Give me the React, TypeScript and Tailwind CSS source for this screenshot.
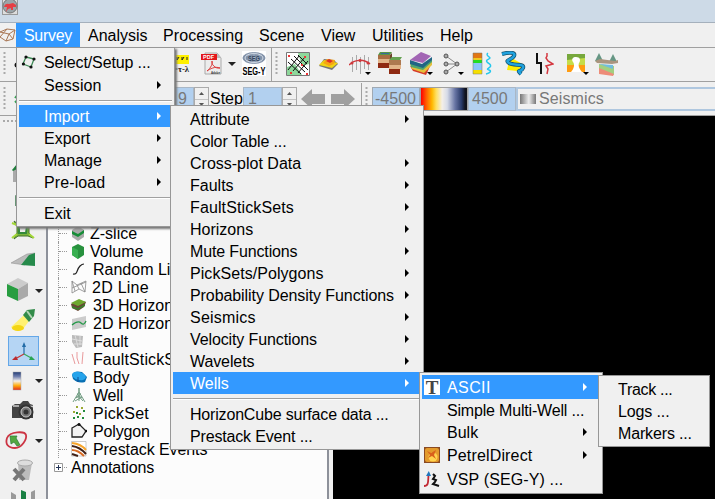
import React from "react";

type Entry = {
  label?: string;
  track?: string;
  arrow?: boolean;
  active?: boolean;
  tall?: boolean;
  icon?: React.ReactNode;
};

const SelectIcon = () => (
  <svg width="16" height="16" viewBox="0 0 16 16">
    <path d="M5 3L13 5L10 13L2 10Z" fill="none" stroke="#3d8a55" strokeWidth="1.3" />
    <g fill="#111"><circle cx="5" cy="3" r="1.6" /><circle cx="13" cy="5" r="1.6" /><circle cx="10" cy="13" r="1.6" /><circle cx="2.4" cy="10" r="1.6" /></g>
  </svg>
);

const TextIcon = () => (
  <span className="flex h-4 w-4 items-center justify-center bg-white font-['Liberation_Serif',serif] text-[19px] font-bold leading-none text-[#444]">T</span>
);

const PetrelIcon = () => (
  <svg width="16" height="16" viewBox="0 0 16 16">
    <rect width="16" height="16" fill="#8a4a22" />
    <rect x="1" y="1" width="14" height="14" rx="2" fill="#e39a2c" />
    <circle cx="9" cy="10" r="4.5" fill="#ffd34f" />
    <path d="M3 4L7 6L12 3L10 8L12 12L8 9L4 11L6 8Z" fill="#d9601c" />
  </svg>
);

const VspIcon = () => (
  <svg width="16" height="16" viewBox="0 0 16 16">
    <path d="M0 15C5 15 4 10 4.500 4" fill="none" stroke="#c22a35" strokeWidth="1.800" />
    <path d="M2 5L4.800 0L7 5Z" fill="#2277bd" />
    <path d="M9 3L11 5L9 8L12 9L11 11L9 13L15 15" fill="none" stroke="#111" strokeWidth="2" />
  </svg>
);

const surveyMenu: Entry[] = [
  { label: "Select/Setup ...", track: "tracking-[-0.12px]", tall: true, icon: <SelectIcon /> },
  { label: "Session", track: "tracking-[0.1px]", arrow: true },
  {},
  { label: "Import", arrow: true, active: true },
  { label: "Export", arrow: true },
  { label: "Manage", arrow: true },
  { label: "Pre-load", track: "tracking-[0.1px]", arrow: true },
  {},
  { label: "Exit" },
];

const importMenu: Entry[] = [
  { label: "Attribute", arrow: true },
  { label: "Color Table ...", track: "tracking-[-0.13px]" },
  { label: "Cross-plot Data", arrow: true },
  { label: "Faults", arrow: true },
  { label: "FaultStickSets", track: "tracking-[0.12px]", arrow: true },
  { label: "Horizons", arrow: true },
  { label: "Mute Functions", track: "tracking-[-0.14px]", arrow: true },
  { label: "PickSets/Polygons", track: "tracking-[0.06px]", arrow: true },
  { label: "Probability Density Functions", track: "tracking-[-0.08px]", arrow: true },
  { label: "Seismics", track: "tracking-[0.22px]", arrow: true },
  { label: "Velocity Functions", track: "tracking-[-0.11px]", arrow: true },
  { label: "Wavelets", track: "tracking-[-0.1px]", arrow: true },
  { label: "Wells", arrow: true, active: true },
  {},
  { label: "HorizonCube surface data ...", track: "tracking-[-0.18px]" },
  { label: "Prestack Event ...", track: "tracking-[-0.16px]" },
];

const wellsMenu: Entry[] = [
  { label: "ASCII", track: "tracking-[0.4px]", arrow: true, active: true, tall: true, icon: <TextIcon /> },
  { label: "Simple Multi-Well ...", track: "tracking-[-0.18px]" },
  { label: "Bulk", arrow: true },
  { label: "PetrelDirect", track: "tracking-[0.15px]", arrow: true, tall: true, icon: <PetrelIcon /> },
  { label: "VSP (SEG-Y) ...", track: "tracking-[0.13px]", tall: true, icon: <VspIcon /> },
];

const asciiMenu: Entry[] = [
  { label: "Track ...", track: "tracking-[-0.3px]" },
  { label: "Logs ...", track: "tracking-[-0.12px]" },
  { label: "Markers ...", track: "tracking-[-0.15px]" },
];

function Menu({ entries, place, gutter, tail }: { entries: Entry[]; place: string; gutter: string; tail: string }) {
  return (
    <div className={`absolute border border-[#979797] bg-[#f0f0f0] p-[2px] ${place}`}>
      {entries.map((e, i) =>
        e.label ? (
          <div key={i} className={`flex items-center ${e.tall ? "h-6" : "h-[22px]"} ${e.active ? "bg-[#3399ff] text-white" : ""}`}>
            <span className={`shrink-0 pl-[2px] ${gutter}`}>{e.icon}</span>
            <span className={`grow whitespace-pre pt-[2px] ${e.track ?? ""}`}>{e.label}</span>
            {e.arrow && (
              <svg width="4" height="8" viewBox="0 0 4 8" className={`shrink-0 ${tail}`}>
                <path d="M0 0L4 4L0 8Z" fill="currentColor" />
              </svg>
            )}
          </div>
        ) : (
          <div key={i} className="flex h-[9px] items-center">
            <div className="h-[2px] w-full border-b border-white bg-[#a0a0a0]" />
          </div>
        )
      )}
    </div>
  );
}

const Caret = ({ cls = "" }: { cls?: string }) => (
  <svg width="8" height="4" viewBox="0 0 8 4" className={`shrink-0 ${cls}`}><path d="M0 0H8L4 4Z" fill="#222" /></svg>
);

const Handle = ({ cls = "" }: { cls?: string }) => (
  <svg width="4" height="24" viewBox="0 0 4 24" className={`shrink-0 ${cls}`}>
    <path d="M1.500 0V24" stroke="#aaa" strokeWidth="2" strokeDasharray="2 2" />
  </svg>
);

function Toolbar() {
  return (
    <div className="flex h-[34px] shrink-0 items-center border-b border-[#a0a0a0] pb-[2px]">
      <Handle cls="ml-[3px]" />
      <svg width="6" height="24" viewBox="0 0 6 24" className="ml-[7px]"><circle cx="3" cy="13" r="2.5" fill="#111" /></svg>
      <svg width="17" height="24" viewBox="0 0 17 24" className="ml-[153px] overflow-visible">
        <rect y="3" width="16" height="9" fill="#fff000" />
        <path d="M1 5V8M4 5V8L6 5M9 5V8L11 5M14 5V8" stroke="#222" fill="none" />
        <text x="0" y="20" fontSize="9" fontWeight="bold" fontFamily="Liberation Serif" textLength="16" lengthAdjust="spacingAndGlyphs" fill="#222">=τ-λ</text>
      </svg>
      <svg width="23" height="24" viewBox="0 0 23 24" className="ml-[10px] overflow-visible">
        <path d="M5 1H17L21 6V22H5Z" fill="#ececec" stroke="#aaa" />
        <path d="M17 1V6H21Z" fill="#bbb" />
        <rect x="1" y="2" width="16" height="6" fill="#e3161b" />
        <text x="3" y="7" fontSize="6" fontWeight="bold" fontFamily="Liberation Sans" textLength="11" lengthAdjust="spacingAndGlyphs" fill="#fff">PDF</text>
        <path d="M7 19C11 16 13 11 12 9C11 12 15 17 20 16C15 14 10 17 7 19Z" fill="none" stroke="#dc3a3a" />
        <text x="11" y="21.500" fontSize="4" fontWeight="bold" fontFamily="Liberation Sans" textLength="9" lengthAdjust="spacingAndGlyphs" fill="#333">Adobe</text>
      </svg>
      <Caret cls="ml-[5px]" />
      <svg width="26" height="26" viewBox="0 0 26 26" className="ml-[5px] overflow-visible">
        <rect x="1" width="24" height="25" fill="#fff" />
        <ellipse cx="13" cy="7" rx="11.500" ry="6" fill="#8292a9" />
        <ellipse cx="13" cy="7" rx="9" ry="4.500" fill="none" stroke="#d2dae5" />
        <path d="M13 1V13M5 4L21 10M5 10L21 4" stroke="#bdc9d8" strokeWidth=".6" />
        <text x="7" y="9.500" fontSize="6.500" fontWeight="bold" fontFamily="Liberation Sans" textLength="12" lengthAdjust="spacingAndGlyphs" fill="#34465e">SEG</text>
        <text x="1.500" y="24" fontSize="11.500" fontWeight="bold" fontFamily="Liberation Sans" textLength="23" lengthAdjust="spacingAndGlyphs" fill="#000">SEG-Y</text>
      </svg>
      <div className="ml-[4px] h-[34px] w-px bg-[#a0a0a0]" />
      <Handle cls="ml-[3px]" />
      <svg width="24" height="24" viewBox="0 0 24 24" className="ml-[7px]">
        <path d="M.5 .5H23.500V23.500H.5Z" fill="#fff" stroke="#777" />
        <path d="M12 1H23V12L16 14ZM1 15L9 12L16 23H1Z" fill="#8ed79b" />
        <path d="M2 10L15 22M5 7L19 20M8 4L22 18M12 3L21 12M2 18L13 4M7 19L19 5M12 21L22 9" stroke="#111" strokeWidth="1" />
        <g fill="#e33"><rect x="2" y="3" width="2" height="2" /><rect x="18" y="4" width="2" height="2" /><rect x="15" y="12" width="2" height="2" /><rect x="4" y="20" width="2" height="2" /><rect x="20" y="21" width="2" height="2" /></g>
      </svg>
      <svg width="19" height="12" viewBox="0 0 19 12" className="ml-[9px]">
        <path d="M0 8L5 1L15 2L19 6L13 12Z" fill="#777" />
        <path d="M0 7L5 2L19 5L13 10Z" fill="#f0d414" />
        <path d="M4 5L8 1L16 2L15 6L10 8Z" fill="#f8a414" />
        <path d="M7 3L10 1L14 3L11 5Z" fill="#df3025" />
      </svg>
      <svg width="23" height="24" viewBox="0 0 23 24" className="ml-[11px]">
        <path d="M3.500 5V20M7.500 3V18M11.500 5V22M15.500 3V17M19.500 5V18" stroke="#aaa" />
        <path d="M0 13C5 8 14 6 21 12" fill="none" stroke="#cf383c" strokeWidth="1.500" />
        <g fill="#cf383c"><circle cx="3" cy="11" r="1.500" /><circle cx="11" cy="8.500" r="1.500" /><circle cx="19" cy="11" r="1.500" /></g>
        <path d="M16 20H22L19 23Z" fill="#000" />
      </svg>
      <svg width="26" height="25" viewBox="0 0 26 25" className="ml-[5px]">
        <path d="M1 4L3 1H15L13 4Z" fill="#579548" /><path d="M4 2H12V3H4Z" fill="#376b9b" />
        <path d="M1 4H15V8H1Z" fill="#a86e43" /><path d="M1 8H14V12H1Z" fill="#e2b489" /><path d="M1 12H14V17H1Z" fill="#8f2a12" />
        <path d="M13 4L15 2V16L13 18Z" fill="#6b4429" />
        <path d="M12 9L15 6H25L23 9Z" fill="#65a252" />
        <path d="M12 9H24V14H12Z" fill="#ad7950" /><path d="M12 14H24V18H12Z" fill="#e2b489" /><path d="M12 18H23V23H12Z" fill="#8f2a12" />
      </svg>
      <svg width="25" height="25" viewBox="0 0 25 25" className="ml-[6px]">
        <path d="M1 15L14 19L23 11L17 24L4 20Z" fill="#d73a29" />
        <path d="M1 13L14 17L23 9V14L15 22L3 18Z" fill="#e4be3a" />
        <path d="M1 11L14 15L23 7V11L14 19L2 16Z" fill="#4fa56e" />
        <path d="M1 9L13 13L23 6V9L14 17L1 13Z" fill="#216484" />
        <path d="M1 9L12 1L22 5L14 12Z" fill="#a265b4" />
        <path d="M18 21H24L21 24Z" fill="#000" />
      </svg>
      <svg width="22" height="24" viewBox="0 0 22 24" className="ml-[9px]">
        <path d="M3 4L14 12L3 20M3 12H14" fill="none" stroke="#888" />
        <g fill="#aaa" stroke="#555"><circle cx="3" cy="4" r="2" /><circle cx="3" cy="12" r="2" /><circle cx="3" cy="20" r="2" /><circle cx="14" cy="12" r="2" /></g>
        <path d="M15 20H21L18 23Z" fill="#000" />
      </svg>
      <svg width="21" height="23" viewBox="0 0 21 23" className="ml-[7px]">
        <path d="M1 1H10V6H1Z" fill="#e27613" /><path d="M1 6H10V8H1Z" fill="#edca21" /><path d="M1 8H10V11H1Z" fill="#24dc21" /><path d="M1 11H10V18H1Z" fill="#8bc5fa" /><path d="M1 18H10V22H1Z" fill="#f6df00" />
        <path d="M1 1H10V22H1Z" fill="none" stroke="#777" strokeWidth=".5" />
        <path d="M16 1C13 3 18 5 18 6S13 8 15 10S20 13 18 15S14 17 17 18S18 21 14 22" fill="none" stroke="#25c7ed" strokeWidth="1.500" />
      </svg>
      <svg width="25" height="25" viewBox="0 0 25 25" className="ml-[8px]">
        <path d="M9 6L23 14L16 20L6 19Z" fill="#ffed00" />
        <path d="M1 3C8 1 15 1 13 5S3 9 8 12S24 12 22 17S15 18 20 23" fill="none" stroke="#15516c" strokeWidth="4" />
        <path d="M1 3C8 1 15 1 13 5S3 9 8 12S24 12 22 17S15 18 20 23" fill="none" stroke="#20a2df" strokeWidth="2.500" />
      </svg>
      <svg width="19" height="23" viewBox="0 0 19 23" className="ml-[9px]">
        <path d="M2 1V11H6V22" fill="none" stroke="#111" strokeWidth="2" />
        <path d="M12 1V4L11 6L13 9L18 12L11 14L13 17L12 22" fill="none" stroke="#d43840" strokeWidth="1.500" />
      </svg>
      <svg width="22" height="23" viewBox="0 0 22 23" className="ml-[13px]">
        <path d="M0 2H18V20H0Z" fill="#77a83d" /><path d="M0 8L18 6V20H0Z" fill="#c5dc49" /><path d="M0 13H18V20H0Z" fill="#ff9c11" />
        <path d="M4 20C7 17 8 12 6 10C4 7 6 5 9 5C13 5 14 8 12 11C11 13 12 17 15 20Z" fill="#fff" />
        <path d="M16 20H22L19 23Z" fill="#000" />
      </svg>
      <svg width="24" height="24" viewBox="0 0 24 24" className="ml-[6px]">
        <path d="M4 1L8 9H0ZM18 2L22 10H14Z" fill="#669684" />
        <path d="M0 9L5 7L20 9L23 8V11L17 12L2 11Z" fill="#aa957f" />
        <path d="M4 12L19 14V23L4 20Z" fill="#a2cf80" /><path d="M4 12L18 13V17Z" fill="#70bdde" /><path d="M4 16L19 22L18 24L4 22Z" fill="#ed8c78" />
      </svg>
    </div>
  );
}

const Spinner = () => (
  <div className="flex h-6 w-[15px] shrink-0 flex-col items-center justify-between border border-[#aaa] bg-[#f0f0f0] py-1">
    <svg width="5" height="3" viewBox="0 0 5 3"><path d="M0 3H5L2.500 0Z" fill="#555" /></svg>
    <div className="h-px w-full bg-[#c4c4c4]" />
    <svg width="5" height="3" viewBox="0 0 5 3"><path d="M0 0H5L2.500 3Z" fill="#555" /></svg>
  </div>
);

function ValueBar() {
  return (
    <div className="flex h-[34px] shrink-0 items-center border-b border-[#a0a0a0] pt-px text-[#787878]">
      <Handle cls="ml-[3px]" />
      <svg width="5" height="20" viewBox="0 0 5 20" className="ml-[7px]"><path d="M5 4L1 9M1 12L4 15" stroke="#36a253" strokeWidth="2" /></svg>
      <div className="ml-[141px] flex h-6 w-[34px] shrink-0 items-center justify-end border border-[#a9b7c6] bg-[#b2d0ef] pr-[6px]">9</div>
      <Spinner />
      <div className="w-[34px] shrink-0 pl-px text-black">Step</div>
      <div className="flex h-6 w-[39px] shrink-0 items-center border border-[#a9b7c6] bg-[#b2d0ef] pl-[4px]">1</div>
      <Spinner />
      <svg width="54" height="20" viewBox="0 0 54 20" className="ml-[4px] shrink-0">
        <path d="M0 10L11 0V5H24V15H11V20ZM54 10L43 0V5H30V15H43V20Z" fill="#a0a0a0" />
      </svg>
      <div className="ml-[6px] h-8 w-px shrink-0 bg-[#a0a0a0]" />
      <Handle cls="ml-[3px]" />
      <div className="ml-[3px] flex h-6 w-[48px] shrink-0 items-center border border-[#a0a9b2] bg-[#b2d0ef] pl-[2px]">-4500</div>
      <div className="h-6 w-[48px] shrink-0 border border-[#a0a0a0] bg-[linear-gradient(90deg,#f00_0%,#ff6a00_13%,#ffb800_24%,#ffe060_33%,#f4efe8_46%,#d6dbe8_57%,#6875a4_74%,#283967_88%,#10121c_96%)]" />
      <div className="flex h-6 w-[48px] shrink-0 items-center border border-[#a9b7c6] bg-[#b2d0ef] pl-[3px]">4500</div>
      <div className="flex h-6 grow items-center border-2 border-r-0 border-[#afc7df] bg-[#f0f0f0] pl-[2px] tracking-[0.12px]">
        <div className="mr-[3px] h-[10px] w-4 bg-[linear-gradient(90deg,#777,#eee_55%,#777)]" />
        Seismics
      </div>
    </div>
  );
}

const sideIcons: { art: React.ReactNode; caret?: boolean; on?: boolean }[] = [
  { art: <g><path d="M3 14L7 9V26H3Z" fill="#aaa" /><path d="M2 14L7 8V13L3 15Z" fill="#1f7d3b" /></g> },
  { art: <path d="M5 9L9 11V20H5Z" fill="#699676" /> },
  { art: <g><path d="M4 5L8 8H18L21 6L19 11V17L23 22L18 20H8L4 23L7 17V11Z" fill="#7ab43d" stroke="#44732d" /><path d="M9 10H17L16 17H9Z" fill="#efefef" stroke="#348a3a" strokeWidth="2" /><path d="M2 7L7 9M23 5L19 9M2 22L7 18M24 22L19 18" stroke="#a4d838" strokeWidth="2" /></g> },
  { art: <g><path d="M1 17L17 8L25 7L15 19Z" fill="#bbb" stroke="#888" strokeWidth=".5" /><path d="M11 19L19 9L25 7V20Z" fill="#268a4b" /></g> },
  { art: <g><path d="M-3 8L8 2L18 7L8 13Z" fill="#ccc" /><path d="M-3 8L8 13V25L-3 20Z" fill="#279d40" /><path d="M8 13L18 7V20L8 25Z" fill="#aaa" /></g>, caret: true },
  { art: <g><path d="M1 21L14 9L19 15L13 23Q5 27 1 21Z" fill="#fff173" /><ellipse cx="8" cy="22" rx="6" ry="3" fill="#f3d514" /><path d="M13 9L17 4L25 3L24 10L19 16Z" fill="#328b49" /><path d="M17 5L22 12" stroke="#b2d4b3" strokeWidth="2" /></g> },
  { art: <g strokeWidth="1.200" fill="none"><path d="M14 17V8" stroke="#226ba7" /><path d="M14 17L5 22" stroke="#c53636" /><path d="M14 17L23 22" stroke="#36a85a" /><path d="M12 10L14 5L16 10Z" fill="#226ba7" /><path d="M6 19L2 23L8 23Z" fill="#ba2b2f" /><path d="M21 19L25 23L19 23Z" fill="#2aa454" /></g>, on: true },
  { art: <g><rect x="3" y="6" width="8" height="18" fill="url(#ramp)" stroke="#aaa" strokeWidth=".5" /></g>, caret: true },
  { art: <g><path d="M2 10L5 8H10L13 5H18L20 8L23 9V22H2Z" fill="#444" /><path d="M3 10H9M20 10.500H23" stroke="#ccc" strokeWidth="1.500" /><circle cx="16" cy="16" r="7.500" fill="#333" /><circle cx="16" cy="16" r="5" fill="#777" stroke="#ccc" /><circle cx="16" cy="16" r="2.500" fill="#333" /></g> },
  { art: <g><path d="M-3 12C0 5 15 5 16 9S12 22 5 22S-5 18-3 12Z" fill="#eee" stroke="#cc3443" strokeWidth="1.800" /><path d="M0 10L7 10L6 12L10 19L7 20L4 16L1 18Z" fill="#52a741" stroke="#287b35" strokeWidth=".7" /></g>, caret: true },
  { art: <g><path d="M8 6L22 7L19 24H9Z" fill="#bcbcbc" /><ellipse cx="15" cy="7" rx="7.500" ry="3" fill="#ddd" stroke="#aaa" /><path d="M4 13L14 24M14 13L4 24" stroke="#777" strokeWidth="4" /></g> },
  { art: <g><path d="M1 6L6 9V24H1Z" fill="#999" /><path d="M11 4L16 6V22H11Z" fill="#197f42" /><path d="M21 6L25 4V24H21Z" fill="#999" /></g> },
];

function SideBar() {
  return (
    <div className="flex w-[46px] shrink-0 flex-col pt-[4px]">
      <svg width="40" height="4" viewBox="0 0 40 4" className="mb-[32px] ml-[3px] shrink-0"><path d="M0 1H40" stroke="#aaa" strokeWidth="2" strokeDasharray="2 2" /></svg>
      {sideIcons.map((it, i) => (
        <div key={i} className="flex h-[30px] shrink-0 items-center pl-[8px]">
          <div className={`h-[30px] w-[31px] shrink-0 ${it.on ? "border border-[#64a7e8] bg-[#b5d5f4] pl-px" : "pl-[2px]"}`}>
            <svg width="28" height="28" viewBox="0 0 28 28" className="overflow-visible">
              <defs><linearGradient id="ramp" x2="0" y2="1"><stop stopColor="#233c75" /><stop offset=".25" stopColor="#7180af" /><stop offset=".5" stopColor="#f4efea" /><stop offset=".75" stopColor="#ffae11" /><stop offset="1" stopColor="#e52a19" /></linearGradient></defs>
              {it.art}
            </svg>
          </div>
          {it.caret && <Caret cls="-ml-[4px]" />}
        </div>
      ))}
    </div>
  );
}

const tree: { label: string; inset: string; track?: string; art: React.ReactNode }[] = [
  { label: "Z-slice", inset: "w-[19px]", art: <g><path d="M1 5L7 1L13 5V12L7 16L1 12Z" fill="#aaa" /><path d="M1 6L7 9L13 5V8L7 12L1 9Z" fill="#178d38" /></g> },
  { label: "Volume", inset: "w-[19px]", art: <g><path d="M1 4L7 1L13 4V12L7 16L1 12Z" fill="#28913e" /><path d="M1 4L7 7V16L1 12Z" fill="#38af50" /></g> },
  { label: "Random Line", inset: "w-[22px]", art: <path d="M2 13C7 14 5 9 9 5Q11 3 13 3" fill="none" stroke="#222" strokeWidth="1.200" /> },
  { label: "2D Line", inset: "w-[21px]", track: "tracking-[0.25px]", art: <path d="M1 2L6 6L15 2L14 13L8 10L1 14ZM6 6L8 10M1 2L4 12M10 4L14 13M1 9L15 3" fill="none" stroke="#888" strokeWidth=".8" /> },
  { label: "3D Horizon", inset: "w-[22px]", art: <g><path d="M0 7L8 3L15 5L13 10L7 14L1 11Z" fill="#6a4835" /><path d="M0 6L8 2L15 5L7 9Z" fill="#6ea82f" /><path d="M1 9L7 11L14 7V9L7 13L1 11Z" fill="#3b7c2c" /></g> },
  { label: "2D Horizon", inset: "w-[22px]", art: <g><path d="M1 4L15 1V12L1 15Z" fill="#ccc" /><path d="M1 10Q7 5 10 8T15 6" fill="none" stroke="#26994a" strokeWidth="1.300" /></g> },
  { label: "Fault", inset: "w-[22px]", track: "tracking-[-0.1px]", art: <g><path d="M1 2L12 3L11 14L5 15L1 9Z" fill="#bbb" /><path d="M1 6L11 8M4 2L7 14M9 3V12M3 11H11" stroke="#ddd" /></g> },
  { label: "FaultStickSet", inset: "w-[22px]", track: "tracking-[0.1px]", art: <path d="M1 3L4 13M6 1V7L8 13M12 1L11 13" fill="none" stroke="#e99a9c" /> },
  { label: "Body", inset: "w-[22px]", art: <g><path d="M1 6Q3 1 11 3L16 8L14 13Q7 15 2 10Z" fill="#086fb2" /><ellipse cx="8" cy="7" rx="7" ry="4" transform="rotate(15 8 7)" fill="#25a3eb" /><path d="M7 8V13" stroke="#104d94" /></g> },
  { label: "Well", inset: "w-[22px]", track: "tracking-[-0.2px]", art: <path d="M8 1V5L2 15M8 5L14 15M5 10H11L4 14M6 7L12 14M6 7H10L5 11M8 1V14" fill="none" stroke="#719c82" /> },
  { label: "PickSet", inset: "w-[22px]", track: "tracking-[0.25px]", art: <g><path d="M5 1H7V3H5ZM10 2H12V4H10ZM2 6H4V8H2ZM8 8H10V10H8Z" fill="#9aa831" /><path d="M12 5H14V7H12ZM2 12H4V14H2ZM6 11H8V13H6ZM11 12H13V14H11ZM5 7H7V9H5Z" fill="#248a3c" /></g> },
  { label: "Polygon", inset: "w-[22px]", track: "tracking-[-0.15px]", art: <g><path d="M1 5L8 1L15 8L11 14H1Z" fill="#f3f3f3" stroke="#222" strokeWidth="1.300" /><g fill="#111"><circle cx="8" cy="1.500" r="1.500" /><circle cx="15" cy="8" r="1.300" /></g></g> },
  { label: "Prestack Events", inset: "w-[22px]", track: "tracking-[-0.08px]", art: <g><path d="M.5 .5H15V15H.5Z" fill="#fff" stroke="#999" strokeWidth=".5" /><path d="M1 2Q10 3 15 9" stroke="#f7a52b" strokeWidth="2" fill="none" /><path d="M1 5Q9 6 15 13" stroke="#402118" strokeWidth="2" fill="none" /><path d="M1 9Q7 9 13 15" stroke="#d96c24" strokeWidth="2" fill="none" /><path d="M1 13L7 15" stroke="#402118" strokeWidth="2" /></g> },
];

function Tree() {
  return (
    <div className="w-[283px] shrink-0 border-l-2 border-r-2 border-[#8d919a] bg-[#fcfcfc] pl-[10px] pt-[108px]">
      {tree.map((t, i) => (
        <div key={i} className="flex h-[18px] items-center border-l border-dotted border-[#999]">
          <div className="mr-[4px] w-[8px] border-t border-dotted border-[#999]" />
          <span className={`shrink-0 ${t.inset}`}><svg width="16" height="16" viewBox="0 0 16 16">{t.art}</svg></span>
          <span className={`whitespace-pre pt-px ${t.track ?? ""}`}>{t.label}</span>
        </div>
      ))}
      <div className="-ml-[4px] flex h-[18px] items-center">
        <svg width="13" height="9" viewBox="0 0 13 9"><path d="M.5 .5H8.500V8.500H.5Z" fill="#fff" stroke="#999" /><path d="M2 4.500H7M4.500 2V7" stroke="#235" /><path d="M10 4.500H13" stroke="#999" strokeDasharray="1 1" /></svg>
        <span className="ml-[4px] pt-px tracking-[-0.12px]">Annotations</span>
      </div>
    </div>
  );
}

const bar = [
  ["Survey", "w-[64px] bg-[#3399ff] text-white tracking-[-0.3px]"],
  ["Analysis", "w-[75px]"],
  ["Processing", "w-[96px] tracking-[0.1px]"],
  ["Scene", "w-[62px]"],
  ["View", "w-[51px]"],
  ["Utilities", "w-[68px]"],
  ["Help", "w-[50px]"],
];

export default function App() {
  return (
    <div className="relative flex h-[499px] w-[715px] flex-col overflow-hidden bg-[#f0f0f0] font-['Liberation_Sans',Arial,sans-serif] text-[16px] leading-[18px] text-black">
      <div className="h-[23px] shrink-0 border-b border-[#a5b0bc] bg-[#cddae7] pl-[2px]">
        <svg width="16" height="15" viewBox="0 0 16 15"><rect x=".5" y="-1" width="15" height="15.500" fill="#ddd" stroke="#999" /><circle cx="8" cy="6" r="7" fill="#9ba5a9" stroke="#777" /><path d="M2 7Q3 3 7 4L11 3L14 5V7H11V10H9V8L6 9L4 12L5 7Z" fill="#e63e44" /></svg>
      </div>
      <div className="flex h-[25px] shrink-0 border-b border-[#a0a0a0]">
        <svg width="16" height="24" viewBox="0 0 16 24" className="shrink-0"><path d="M0 9L7 6L15 7L13 16L6 18L0 14M0 9L9 11L15 7M9 11L6 18M9 11L13 16M7 6L0 14" fill="none" stroke="#a97755" /></svg>
        {bar.map(([label, cls]) => (
          <div key={label} className={`flex shrink-0 items-center pl-2 pt-[2px] ${cls}`}>{label}</div>
        ))}
      </div>
      <Toolbar />
      <ValueBar />
      <div className="flex min-h-0 grow overflow-hidden">
        <SideBar />
        <Tree />
        <div className="ml-[4px] grow bg-black" />
      </div>
      <Menu entries={surveyMenu} place="left-[16px] top-[47px] w-[159px] shadow-[2px_2px_2px_#777]" gutter="w-[25px]" tail="mr-[11px]" />
      <Menu entries={importMenu} place="left-[170px] top-[105px] w-[254px]" gutter="w-[17px]" tail="mr-[12px]" />
      <Menu entries={wellsMenu} place="left-[419px] top-[372px] w-[184px]" gutter="w-[25px]" tail="mr-[13px]" />
      <Menu entries={asciiMenu} place="left-[598px] top-[375px] w-[112px]" gutter="w-[17px]" tail="" />
    </div>
  );
}
